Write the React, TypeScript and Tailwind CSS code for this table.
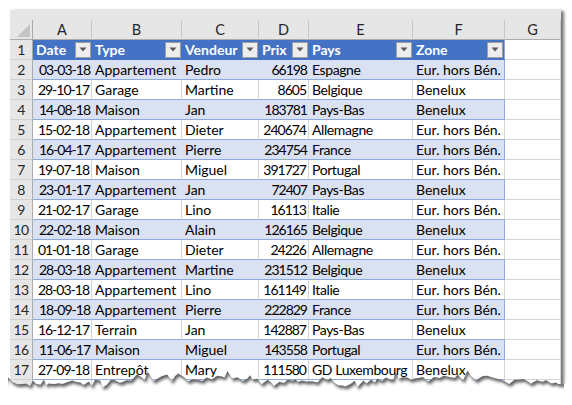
import React from "react";

const COLS = ["A", "B", "C", "D", "E", "F", "G"];
const HEAD = ["Date", "Type", "Vendeur", "Prix", "Pays", "Zone"];
const ROWS: [string, string, string, string, string, string][] = [
  ["03-03-18", "Appartement", "Pedro", "66198", "Espagne", "Eur. hors Bén."],
  ["29-10-17", "Garage", "Martine", "8605", "Belgique", "Benelux"],
  ["14-08-18", "Maison", "Jan", "183781", "Pays-Bas", "Benelux"],
  ["15-02-18", "Appartement", "Dieter", "240674", "Allemagne", "Eur. hors Bén."],
  ["16-04-17", "Appartement", "Pierre", "234754", "France", "Eur. hors Bén."],
  ["19-07-18", "Maison", "Miguel", "391727", "Portugal", "Eur. hors Bén."],
  ["23-01-17", "Appartement", "Jan", "72407", "Pays-Bas", "Benelux"],
  ["21-02-17", "Garage", "Lino", "16113", "Italie", "Eur. hors Bén."],
  ["22-02-18", "Maison", "Alain", "126165", "Belgique", "Benelux"],
  ["01-01-18", "Garage", "Dieter", "24226", "Allemagne", "Eur. hors Bén."],
  ["28-03-18", "Appartement", "Martine", "231512", "Belgique", "Benelux"],
  ["28-03-18", "Appartement", "Lino", "161149", "Italie", "Eur. hors Bén."],
  ["18-09-18", "Appartement", "Pierre", "222829", "France", "Eur. hors Bén."],
  ["16-12-17", "Terrain", "Jan", "142887", "Pays-Bas", "Benelux"],
  ["11-06-17", "Maison", "Miguel", "143558", "Portugal", "Eur. hors Bén."],
  ["27-09-18", "Entrepôt", "Mary", "111580", "GD Luxembourg", "Benelux"],
];

function jag(): [number, number][] {
  let s = 11;
  const rnd = () => {
    s = (s * 9301 + 49297) % 233280;
    return s / 233280;
  };
  const pts: [number, number][] = [];
  let x = 4;
  while (x < 570) {
    const base = 11 + 2.5 * Math.sin(x / 41) + 1.5 * Math.sin(x / 13);
    const spike = rnd() < 0.15 ? -4 : 0;
    pts.push([x, base + (rnd() - 0.5) * 7 + spike]);
    x += 2 + rnd() * 4;
  }
  return pts;
}

function TornEdge() {
  const pts = jag();
  const line = pts.map(([x, y]) => `${x.toFixed(1)},${y.toFixed(1)}`).join(" L");
  const below = `M0,${pts[0][1].toFixed(1)} L${line} L572,${pts[pts.length - 1][1].toFixed(1)} L572,40 L0,40 Z`;
  const above = `M0,-20 L0,${pts[0][1].toFixed(1)} L${line} L572,${pts[pts.length - 1][1].toFixed(1)} L572,-20 Z`;
  return (
    <svg
      className="absolute left-0 top-[370px]"
      width={572}
      height={35}
      viewBox="0 0 572 35"
    >
      <defs>
        <clipPath id="belowClip">
          <path d={below} />
        </clipPath>
        <clipPath id="paperClip">
          <rect x={8} y={-20} width={556} height={60} />
        </clipPath>
        <filter id="blur" x="-5%" y="-50%" width="110%" height="200%">
          <feGaussianBlur stdDeviation="1.6" />
        </filter>
      </defs>
      <path d={below} fill="#ffffff" />
      <g clipPath="url(#belowClip)">
        <g clipPath="url(#paperClip)">
          <path d={above} fill="#4a4a4a" transform="translate(1.5,3)" filter="url(#blur)" opacity="0.85" />
        </g>
      </g>
    </svg>
  );
}

function Drop() {
  return (
    <div className="w-[16px] h-[16px] bg-[#EDEDED] border border-[#9E9E9E] flex items-center justify-center shrink-0">
      <svg width="8" height="5" viewBox="0 0 8 5">
        <path d="M0.5,0.5 L7.5,0.5 L4,4.5 Z" fill="#5A5A5A" />
      </svg>
    </div>
  );
}

export default function App() {
  return (
    <div className="w-[572px] h-[405px] bg-white relative overflow-hidden font-['Lato',sans-serif] text-[14px] text-black">
      <div className="ml-[10px] mt-[10px] w-[551px] h-[385px] overflow-hidden bg-white shadow-[3px_1px_3px_rgba(0,0,0,0.55)]">
        <div className="h-[10px] bg-[#E6E6E6]" />
        <div className="grid grid-cols-[23px_59px_90px_77px_50px_104px_92px_56px] leading-[20px]">
          {/* column header row */}
          <div className="h-[20px] bg-[#E6E6E6] border-r border-r-[#ABABAB] border-b border-b-[#ABABAB] relative">
            <svg className="absolute left-[7px] top-[4px]" width="13" height="13" viewBox="0 0 13 13">
              <path d="M13,0 L13,13 L0,13 Z" fill="#C4C4C4" />
            </svg>
          </div>
          {COLS.map((c) => (
            <div
              key={c}
              className="h-[20px] bg-[#E6E6E6] border-r border-r-[#C8C8C8] border-b border-b-[#ABABAB] text-center text-[#262626] text-[14.5px]"
            >
              {c}
            </div>
          ))}

          {/* row 1: table header */}
          <div className="h-[20px] bg-[#E6E6E6] border-r border-r-[#ABABAB] border-b border-b-[#D0D0D0] text-center text-[#262626] tracking-[-0.5px]">
            1
          </div>
          {HEAD.map((h, i) => (
            <div
              key={h}
              className={`h-[20px] bg-[#4472C4] border-b border-b-[#4472C4] flex items-center justify-between pl-[3px] pr-[1px] text-white font-bold ${
                i === 5 ? "border-r border-r-[#8EA9DB]" : ""
              }`}
            >
              <span className="leading-[20px]">{h}</span>
              <Drop />
            </div>
          ))}
          <div className="h-[20px] border-r border-r-[#D4D4D4] border-b border-b-[#D4D4D4]" />

          {ROWS.map((r, ri) => {
            const n = ri + 2;
            const blue = n % 2 === 0;
            const cell = blue
              ? "h-[20px] bg-[#D9E1F2] border-b border-b-[#8EA9DB] whitespace-nowrap overflow-hidden"
              : "h-[20px] bg-white border-r border-r-[#D4D4D4] border-b border-b-[#8EA9DB] whitespace-nowrap overflow-hidden";
            return (
              <React.Fragment key={n}>
                <div className="h-[20px] bg-[#E6E6E6] border-r border-r-[#ABABAB] border-b border-b-[#D0D0D0] text-center text-[#262626] tracking-[-0.5px]">
                  {n}
                </div>
                <div className={`${cell} text-right pr-[2px] tracking-[-1px]`}>{r[0]}</div>
                <div className={`${cell} pl-[3px]`}>{r[1]}</div>
                <div className={`${cell} pl-[3px]`}>{r[2]}</div>
                <div className={`${cell} text-right pr-[2px] tracking-[-1px]`}>{r[3]}</div>
                <div className={`${cell} pl-[3px] tracking-[-0.4px]`}>{r[4]}</div>
                <div className={`${cell} pl-[3px] border-r border-r-[#8EA9DB]`}>{r[5]}</div>
                <div className="h-[20px] border-r border-r-[#D4D4D4] border-b border-b-[#D4D4D4]" />
              </React.Fragment>
            );
          })}

          {/* row 18 partially visible */}
          <div className="h-[20px] bg-[#E6E6E6] border-r border-r-[#ABABAB] border-b border-b-[#D0D0D0]" />
          {COLS.map((c) => (
            <div key={c} className="h-[20px] border-r border-r-[#D4D4D4] border-b border-b-[#D4D4D4]" />
          ))}
        </div>
      </div>
      <TornEdge />
    </div>
  );
}
